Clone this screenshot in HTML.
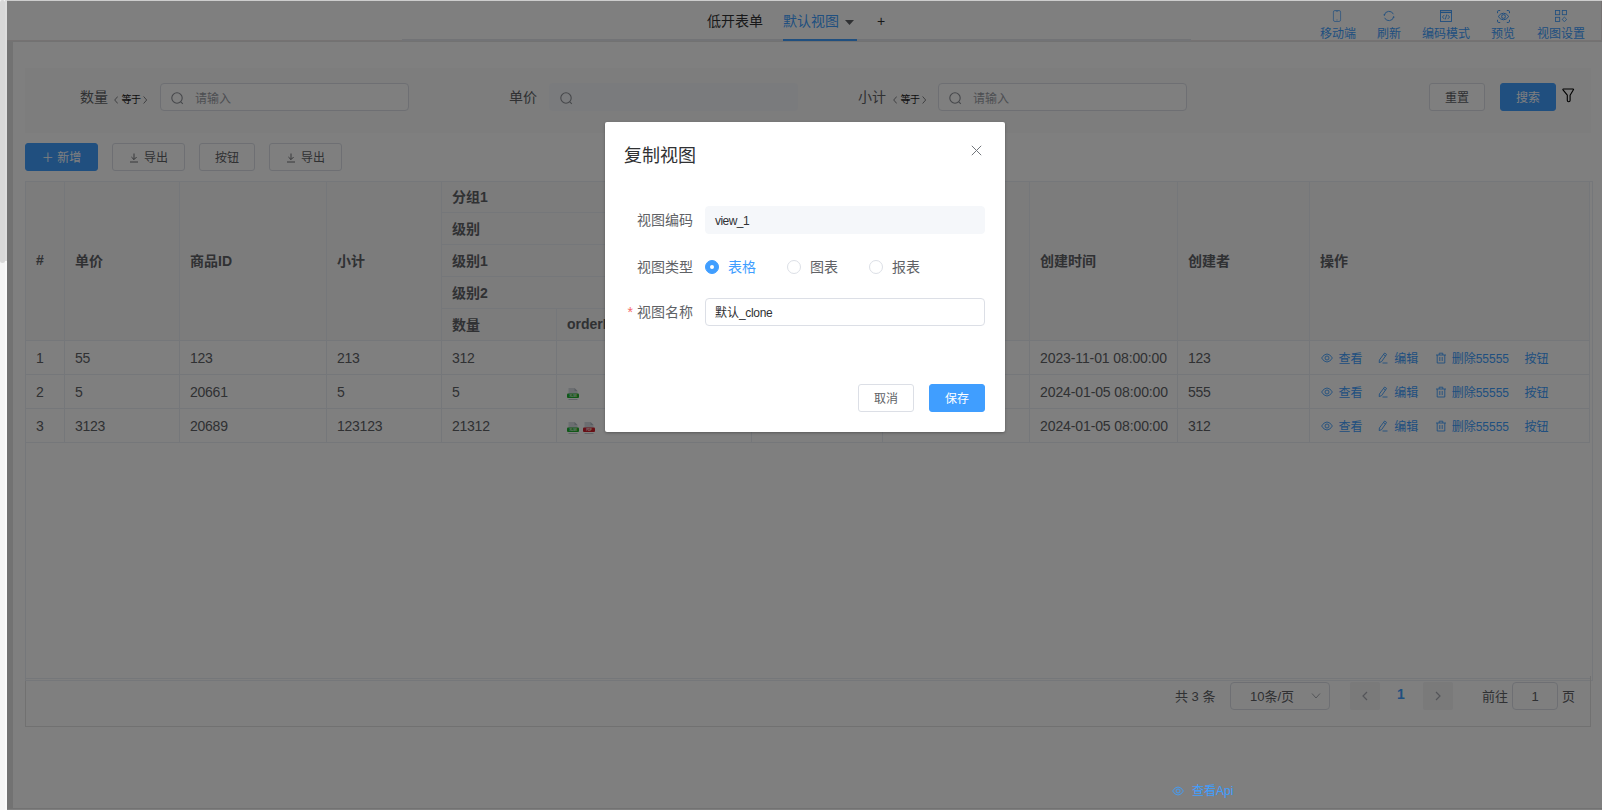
<!DOCTYPE html>
<html lang="zh-CN">
<head>
<meta charset="utf-8">
<title>低开表单 - 复制视图</title>
<style>
*{box-sizing:border-box;margin:0;padding:0}
html,body{width:1602px;height:810px;overflow:hidden}
body{background:#f5f5f5;font-family:"Liberation Sans","Noto Sans CJK SC",sans-serif;font-size:14px;color:#606266;position:relative}
.abs{position:absolute}
#app{position:absolute;left:7px;top:1px;width:1595px;height:809px;background:#e4e4e4;overflow:hidden}
/* header */
#hdr{position:absolute;left:0;top:0;width:1595px;height:40px;background:#fff;border-bottom:1px solid #ebe5e4;border-right:1px solid #ebe5e4}
#tabline{position:absolute;left:395px;top:38px;width:789px;height:2px;background:#e4e7ed}
#tabactive{position:absolute;left:776px;top:38px;width:74px;height:2px;background:#409eff}
.tab{position:absolute;top:0;height:40px;line-height:40px;font-size:14px;color:#303133;white-space:nowrap}
.tab.on{color:#409eff}
.tool{position:absolute;top:0;height:40px;text-align:center;color:#409eff;font-size:12px;white-space:nowrap}
.tool svg{position:absolute;top:9px;left:50%;margin-left:-6px;width:12px;height:12px}
.tool span{position:absolute;top:25px;left:0;width:100%;line-height:16px}
/* card */
#card{position:absolute;left:6px;top:41px;width:1589px;height:766px;background:#fff}
#foot{position:absolute;left:0;top:808px;width:1595px;height:1px;background:#fff}
#filter{position:absolute;left:12px;top:26px;width:1566px;height:65px;background:#fafafa}
.flabel{position:absolute;top:15px;height:28px;line-height:28px;font-size:14px;color:#606266;white-space:nowrap}
.fop{font-size:10px;color:#222;top:18px;margin-left:1px}
.fop svg{width:4.4px;height:8px;vertical-align:-1px}
.finput{position:absolute;top:15px;height:28px;width:249px;border:1px solid #dcdfe6;border-radius:4px;background:#fff}
.finput.dis{border-color:#f5f7fa;background:#f5f7fa}
.finput svg{position:absolute;left:10px;top:8px;width:13px;height:13px}
.finput span{position:absolute;left:34px;top:1.5px;line-height:26px;font-size:12px;color:#9a9da5}
.btn{position:absolute;height:28px;line-height:28px;border:1px solid #dcdfe6;border-radius:3px;background:#fff;color:#606266;font-size:12px;text-align:center;white-space:nowrap}
.btn.pri{background:#409eff;border-color:#409eff;color:#fff}
/* table */
#tbl{position:absolute;left:12px;top:139px;width:1568px;height:500px;border:1px solid #ebeef5}
table{border-collapse:collapse;table-layout:fixed;position:absolute;left:-1px;top:-1px;width:1565px}
th,td{border:1px solid #ebeef5;padding:0 10px;text-align:left;font-size:14px;white-space:nowrap;overflow:hidden}
th{height:32px;color:#606266;font-weight:bold;background:#f8f8f9;padding-bottom:2px}
thead tr:first-child th{height:31px}
thead tr:first-child th[rowspan]{height:159px}
td{height:34px;color:#606266;letter-spacing:-0.25px}
.lk{color:#409eff;font-size:12px;margin-right:17px;display:inline-block;letter-spacing:0;position:relative;top:-0.5px}
.fi{vertical-align:middle;margin-right:4px;position:relative;top:1.2px}
.lk svg{width:12px;height:12px;vertical-align:-1.5px;margin-right:5.5px}
#pager{position:absolute;left:12px;top:639px;width:1566px;height:46px;border:1px solid #e2e2e2;border-top:0;font-size:13px;color:#606266}
#pager .t{position:absolute;top:0;line-height:32px;white-space:nowrap}
/* overlay + dialog */
#mask{position:absolute;left:7px;top:1px;width:1595px;height:809px;background:rgba(0,0,0,.5)}
#dlg{position:absolute;left:605px;top:122px;width:400px;height:310px;background:#fff;border-radius:2px;box-shadow:0 1px 3px rgba(0,0,0,.3)}
#dlg .title{position:absolute;left:19px;top:19.5px;font-size:18px;line-height:28px;color:#303133}
#dlg .lab{position:absolute;left:0;width:88px;text-align:right;font-size:14px;line-height:28px;color:#606266;white-space:nowrap}
#dlg .inp{position:absolute;left:100px;width:280px;height:28px;border:1px solid #dcdfe6;border-radius:4px;font-size:12px;line-height:28px;padding-left:9px;color:#303133;letter-spacing:-0.55px}
#dlg .inp.dis{background:#f5f7fa;border-color:#f5f7fa}
.radio{position:absolute;top:138px;height:14px;width:14px;border:1px solid #dcdfe6;border-radius:50%;background:#fff}
.radio.on{border-color:#409eff;background:#409eff}
.radio.on:after{content:"";position:absolute;left:4px;top:4px;width:4px;height:4px;border-radius:50%;background:#fff}
.rlabel{position:absolute;top:131px;line-height:28px;font-size:14px;color:#606266}
#api{position:absolute;left:1172px;top:783px;height:16px;line-height:16px;font-size:12px;color:#409eff;white-space:nowrap}
</style>
</head>
<body>
<div class="abs" style="left:5px;top:0;width:2px;height:810px;background:#fafafa"></div>
<div class="abs" style="left:5px;top:0;width:2px;height:261px;background:#dddddd"></div>
<div class="abs" style="left:0;top:0;width:5px;height:263px;background:#d8d8d8;border-radius:2.5px"></div>
<div class="abs" style="left:7px;top:0;width:1595px;height:1px;background:#cdcdcd"></div>
<div id="app">
  <div id="hdr">
    <div id="tabline"></div>
    <div id="tabactive"></div>
    <div class="tab" style="left:700px">低开表单</div>
    <div class="tab on" style="left:776px">默认视图</div>
    <svg class="abs" style="left:838px;top:19px" width="9" height="5" viewBox="0 0 9 5"><path d="M0 0h9L4.5 5z" fill="#606266"/></svg>
    <div class="tab" style="left:870px">+</div>

    <div class="tool" style="left:1300px;width:62px"><svg style="margin-left:-7px" viewBox="0 0 12 12" fill="none" stroke="#409eff" stroke-width="0.7"><rect x="2.4" y="0.5" width="7.2" height="11" rx="1.6"/><path d="M4.8 1.3h2.4M5.3 10h1.4" stroke-width="0.6"/></svg><span>移动端</span></div>
    <div class="tool" style="left:1357px;width:50px"><svg viewBox="0 0 12 12" fill="none" stroke="#409eff" stroke-width="0.9"><path d="M1.3 5.2A4.8 4.8 0 0 1 10.4 4.2M10.7 6.8A4.8 4.8 0 0 1 1.6 7.8"/><path d="M0.3 4.4h2.2L1.3 6.1zM11.7 7.6H9.5l1.2-1.7z" fill="#409eff" stroke="none"/></svg><span>刷新</span></div>
    <div class="tool" style="left:1408px;width:62px"><svg viewBox="0 0 12 12" fill="none" stroke="#409eff" stroke-width="0.9"><rect x="0.5" y="0.5" width="11" height="11"/><path d="M0.5 2.4h11" stroke-width="1.3"/><path d="M4.4 4.9L2.4 7l2 2.1M7.6 4.9L9.6 7l-2 2.1M6.7 4.6L5.3 9.4" stroke-width="0.9"/></svg><span>编码模式</span></div>
    <div class="tool" style="left:1471px;width:50px"><svg style="width:13px;height:13px;margin-left:-6.5px;top:8.5px" viewBox="0 0 13 13" fill="none" stroke="#409eff" stroke-width="1"><path d="M0.5 3.2V1.8Q0.5 0.5 1.8 0.5H3.2M9.8 0.5h1.4Q12.5 0.5 12.5 1.8V3.2M12.5 9.8v1.4Q12.5 12.5 11.2 12.5H9.8M3.2 12.5H1.8Q0.5 12.5 0.5 11.2V9.8"/><path d="M1.2 6.5Q3.6 3.2 6.5 3.2T11.8 6.5Q9.4 9.8 6.5 9.8T1.2 6.5z"/><circle cx="6.5" cy="6.5" r="1.9"/></svg><span>预览</span></div>
    <div class="tool" style="left:1523px;width:62px"><svg viewBox="0 0 12 12" fill="none" stroke="#409eff" stroke-width="0.85"><rect x="0.5" y="0.5" width="4.2" height="4.2"/><rect x="7.3" y="0.5" width="4.2" height="4.2"/><rect x="0.5" y="7.3" width="4.2" height="4.2"/><path d="M9.4 7.2l2 1.8q.3.4 0 .8l-2 1.8-2-1.8q-.3-.4 0-.8z"/></svg><span>视图设置</span></div>
  </div>
  <div id="foot"></div>
  <div id="card">
    <div id="filter">
      <div class="flabel" style="left:55px">数量</div>
      <div class="flabel fop" style="left:88px"><svg viewBox="0 0 5 9" fill="none" stroke="#606266" stroke-width="0.9"><path d="M4.3 0.5L0.8 4.5l3.5 4"/></svg><span style="margin:0 2.5px 0 3px;letter-spacing:-0.5px">等于</span><svg viewBox="0 0 5 9" fill="none" stroke="#606266" stroke-width="0.9"><path d="M0.7 0.5l3.5 4-3.5 4"/></svg></div>
      <div class="finput" style="left:135px"><svg viewBox="0 0 13 13" fill="none" stroke="#8c8f96" stroke-width="1.1"><circle cx="6" cy="6" r="5.2"/><path d="M9.8 9.8l2 2"/></svg><span>请输入</span></div>
      <div class="flabel" style="left:484px">单价</div>
      <div class="finput dis" style="left:524px"><svg viewBox="0 0 13 13" fill="none" stroke="#8c8f96" stroke-width="1.1"><circle cx="6" cy="6" r="5.2"/><path d="M9.8 9.8l2 2"/></svg></div>
      <div class="flabel" style="left:833px">小计</div>
      <div class="flabel fop" style="left:867px"><svg viewBox="0 0 5 9" fill="none" stroke="#606266" stroke-width="0.9"><path d="M4.3 0.5L0.8 4.5l3.5 4"/></svg><span style="margin:0 2.5px 0 3px;letter-spacing:-0.5px">等于</span><svg viewBox="0 0 5 9" fill="none" stroke="#606266" stroke-width="0.9"><path d="M0.7 0.5l3.5 4-3.5 4"/></svg></div>
      <div class="finput" style="left:913px"><svg viewBox="0 0 13 13" fill="none" stroke="#8c8f96" stroke-width="1.1"><circle cx="6" cy="6" r="5.2"/><path d="M9.8 9.8l2 2"/></svg><span>请输入</span></div>
      <div class="btn" style="left:1404px;top:15px;width:56px">重置</div>
      <div class="btn pri" style="left:1475px;top:15px;width:56px">搜索</div>
      <svg class="abs" style="left:1537px;top:20px" width="13" height="15" viewBox="0 0 13 15" fill="none" stroke="#000" stroke-width="1.1" stroke-linejoin="round"><path d="M1.4 1h9.6q.9 0 .4.8L8.1 7.2v5.3q0 1.2-1.4 1.2t-1.400-1.200V7.200L1 1.800q-.5-.8.400-.8z"/></svg>
    </div>
    <div class="btn pri" style="left:12px;top:101px;width:73px">＋ 新增</div>
    <div class="btn" style="left:99px;top:101px;width:73px"><svg width="10" height="10" viewBox="0 0 10 10" fill="none" stroke="#606266" stroke-width="0.9" style="vertical-align:-1px;margin-right:5px"><path d="M5 0.5v6M2.4 4L5 6.6 7.6 4M1 9h8"/></svg>导出</div>
    <div class="btn" style="left:186px;top:101px;width:56px">按钮</div>
    <div class="btn" style="left:256px;top:101px;width:73px"><svg width="10" height="10" viewBox="0 0 10 10" fill="none" stroke="#606266" stroke-width="0.9" style="vertical-align:-1px;margin-right:5px"><path d="M5 0.5v6M2.4 4L5 6.6 7.6 4M1 9h8"/></svg>导出</div>

    <div id="tbl">
      <table>
        <colgroup><col style="width:39px"><col style="width:115px"><col style="width:147px"><col style="width:115px"><col style="width:115px"><col style="width:195px"><col style="width:131px"><col style="width:147px"><col style="width:148px"><col style="width:132px"><col style="width:280px"></colgroup>
        <thead>
          <tr><th rowspan="5">#</th><th rowspan="5">单价</th><th rowspan="5">商品ID</th><th rowspan="5">小计</th><th colspan="3">分组1</th><th rowspan="5">更新时间</th><th rowspan="5">创建时间</th><th rowspan="5">创建者</th><th rowspan="5">操作</th></tr>
          <tr><th colspan="3">级别</th></tr>
          <tr><th colspan="3">级别1</th></tr>
          <tr><th colspan="3">级别2</th></tr>
          <tr><th>数量</th><th>orderId</th><th>图片</th></tr>
        </thead>
        <tbody>
          <tr><td>1</td><td>55</td><td>123</td><td>213</td><td>312</td><td></td><td></td><td></td><td style="letter-spacing:-0.11px">2023-11-01 08:00:00</td><td>123</td><td style="padding-left:11px"><span class="lk" style="margin-right:14.2px"><svg viewBox="0 0 12 12" fill="none" stroke="#409eff" stroke-width="0.9"><path d="M0.6 6Q3 2 6 2T11.4 6Q9 10 6 10T0.6 6z"/><circle cx="6" cy="6" r="2"/></svg>查看</span><span class="lk" style="margin-right:16.7px"><svg viewBox="0 0 12 12" fill="none" stroke="#409eff" stroke-width="0.9"><path d="M7.6 1l2 1.4-5 7.2-2.4 1 .2-2.6zM6.6 2.6l2 1.4M5.5 11h5"/></svg>编辑</span><span class="lk" style="margin-right:15.5px"><svg style="margin-right:4.7px" viewBox="0 0 12 12" fill="none" stroke="#409eff" stroke-width="0.9"><path d="M1 3h10M4.2 3V1.2h3.6V3M2.2 3v8h7.6V3M4.8 5v4M7.2 5v4"/></svg>删除55555</span><span class="lk" style="margin-right:0">按钮</span></td></tr>
          <tr><td>2</td><td>5</td><td>20661</td><td>5</td><td>5</td><td><svg class="fi" width="12" height="12" viewBox="0 0 12 12"><path d="M1.5 0h6l3 3v6h-9z" fill="#d8dde2"/><path d="M7.5 0l3 3h-3z" fill="#b4bcc4"/><rect x="0" y="5.4" width="12" height="4.6" rx="1" fill="#21b02f"/><rect x="1.5" y="11" width="9" height="0.8" fill="#b4bcc4"/><text x="6" y="9.2" font-size="3.2" font-weight="bold" fill="#fff" fill-opacity="0.85" text-anchor="middle" font-family="Liberation Sans, sans-serif">XLSX</text></svg></td><td></td><td></td><td style="letter-spacing:-0.11px">2024-01-05 08:00:00</td><td>555</td><td style="padding-left:11px"><span class="lk" style="margin-right:14.2px"><svg viewBox="0 0 12 12" fill="none" stroke="#409eff" stroke-width="0.9"><path d="M0.6 6Q3 2 6 2T11.4 6Q9 10 6 10T0.6 6z"/><circle cx="6" cy="6" r="2"/></svg>查看</span><span class="lk" style="margin-right:16.7px"><svg viewBox="0 0 12 12" fill="none" stroke="#409eff" stroke-width="0.9"><path d="M7.6 1l2 1.4-5 7.2-2.4 1 .2-2.6zM6.6 2.6l2 1.4M5.5 11h5"/></svg>编辑</span><span class="lk" style="margin-right:15.5px"><svg style="margin-right:4.7px" viewBox="0 0 12 12" fill="none" stroke="#409eff" stroke-width="0.9"><path d="M1 3h10M4.2 3V1.2h3.6V3M2.2 3v8h7.6V3M4.8 5v4M7.2 5v4"/></svg>删除55555</span><span class="lk" style="margin-right:0">按钮</span></td></tr>
          <tr><td>3</td><td>3123</td><td>20689</td><td>123123</td><td>21312</td><td><svg class="fi" width="12" height="12" viewBox="0 0 12 12"><path d="M1.5 0h6l3 3v6h-9z" fill="#d8dde2"/><path d="M7.5 0l3 3h-3z" fill="#b4bcc4"/><rect x="0" y="5.4" width="12" height="4.6" rx="1" fill="#21b02f"/><rect x="1.5" y="11" width="9" height="0.8" fill="#b4bcc4"/><text x="6" y="9.2" font-size="3.2" font-weight="bold" fill="#fff" fill-opacity="0.85" text-anchor="middle" font-family="Liberation Sans, sans-serif">XLSX</text></svg><svg class="fi" width="12" height="12" viewBox="0 0 12 12"><path d="M1.5 0h6l3 3v6h-9z" fill="#d8dde2"/><path d="M7.5 0l3 3h-3z" fill="#b4bcc4"/><rect x="0" y="5.4" width="12" height="4.6" rx="1" fill="#d0202c"/><rect x="1.5" y="11" width="9" height="0.8" fill="#b4bcc4"/><text x="6" y="9.2" font-size="3.2" font-weight="bold" fill="#fff" fill-opacity="0.85" text-anchor="middle" font-family="Liberation Sans, sans-serif">PDF</text></svg></td><td></td><td></td><td style="letter-spacing:-0.11px">2024-01-05 08:00:00</td><td>312</td><td style="padding-left:11px"><span class="lk" style="margin-right:14.2px"><svg viewBox="0 0 12 12" fill="none" stroke="#409eff" stroke-width="0.9"><path d="M0.6 6Q3 2 6 2T11.4 6Q9 10 6 10T0.6 6z"/><circle cx="6" cy="6" r="2"/></svg>查看</span><span class="lk" style="margin-right:16.7px"><svg viewBox="0 0 12 12" fill="none" stroke="#409eff" stroke-width="0.9"><path d="M7.6 1l2 1.4-5 7.2-2.4 1 .2-2.6zM6.6 2.6l2 1.4M5.5 11h5"/></svg>编辑</span><span class="lk" style="margin-right:15.5px"><svg style="margin-right:4.7px" viewBox="0 0 12 12" fill="none" stroke="#409eff" stroke-width="0.9"><path d="M1 3h10M4.2 3V1.2h3.6V3M2.2 3v8h7.6V3M4.8 5v4M7.2 5v4"/></svg>删除55555</span><span class="lk" style="margin-right:0">按钮</span></td></tr>
        </tbody>
      </table>
      <div class="abs" style="left:-1px;top:496px;width:1566px;height:1px;background:#ebeef5"></div>
    </div>
    <div id="pager">
      <div class="abs" style="left:1564px;top:-5px;width:1px;height:5px;background:#e2e2e2"></div>
      <div class="t" style="left:1149px;top:0">共 3 条</div>
      <div class="abs" style="left:1204px;top:1px;width:100px;height:28px;border:1px solid #dcdfe6;border-radius:4px;line-height:27px;padding-left:19px;white-space:nowrap">10条/页<svg class="abs" style="left:80px;top:9px" width="10" height="8" viewBox="0 0 10 8" fill="none" stroke="#a8abb2" stroke-width="1"><path d="M1 1.5l4 4.5 4-4.5"/></svg></div>
      <div class="abs" style="left:1324px;top:1px;width:30px;height:28px;background:#f4f4f5;border-radius:2px"><svg class="abs" style="left:11px;top:9px" width="8" height="10" viewBox="0 0 8 10" fill="none" stroke="#a8abb2" stroke-width="1.2"><path d="M6 1L2 5l4 4"/></svg></div>
      <div class="t" style="left:1371px;top:-3.5px;color:#409eff;font-weight:bold;font-size:14px">1</div>
      <div class="abs" style="left:1397px;top:1px;width:30px;height:28px;background:#f4f4f5;border-radius:2px"><svg class="abs" style="left:11px;top:9px" width="8" height="10" viewBox="0 0 8 10" fill="none" stroke="#a8abb2" stroke-width="1.2"><path d="M2 1l4 4-4 4"/></svg></div>
      <div class="t" style="left:1456px;top:0">前往</div>
      <div class="abs" style="left:1486px;top:1px;width:46px;height:28px;border:1px solid #dcdfe6;border-radius:4px;line-height:28px;text-align:center">1</div>
      <div class="t" style="left:1536px;top:0">页</div>
    </div>
  </div>
</div>
<div id="mask"></div>
<div id="dlg">
  <div class="title">复制视图</div>
  <svg class="abs" style="left:366px;top:23px" width="11" height="11" viewBox="0 0 11 11" fill="none" stroke="#72767b" stroke-width="1"><path d="M0.8 0.8l9.4 9.4M10.2 0.8L0.8 10.2"/></svg>
  <div class="lab" style="top:84px">视图编码</div>
  <div class="inp dis" style="top:84px">view_1</div>
  <div class="lab" style="top:131px">视图类型</div>
  <div class="radio on" style="left:100px"></div><div class="rlabel" style="left:123px;color:#409eff">表格</div>
  <div class="radio" style="left:182px"></div><div class="rlabel" style="left:205px">图表</div>
  <div class="radio" style="left:264px"></div><div class="rlabel" style="left:287px">报表</div>
  <div class="lab" style="top:176px"><span style="color:#f56c6c;margin-right:4px">*</span>视图名称</div>
  <div class="inp" style="top:176px;letter-spacing:0">默认<span style="letter-spacing:-0.35px">_clone</span></div>
  <div class="btn" style="left:253px;top:262px;width:56px">取消</div>
  <div class="btn pri" style="left:324px;top:262px;width:56px">保存</div>
</div>
<div id="api"><svg width="12" height="12" viewBox="0 0 12 12" fill="none" stroke="#409eff" stroke-width="0.9" style="vertical-align:-2px;margin-right:8px"><path d="M0.6 6Q3 2 6 2T11.4 6Q9 10 6 10T0.6 6z"/><circle cx="6" cy="6" r="2"/></svg>查看Api</div>
</body>
</html>
